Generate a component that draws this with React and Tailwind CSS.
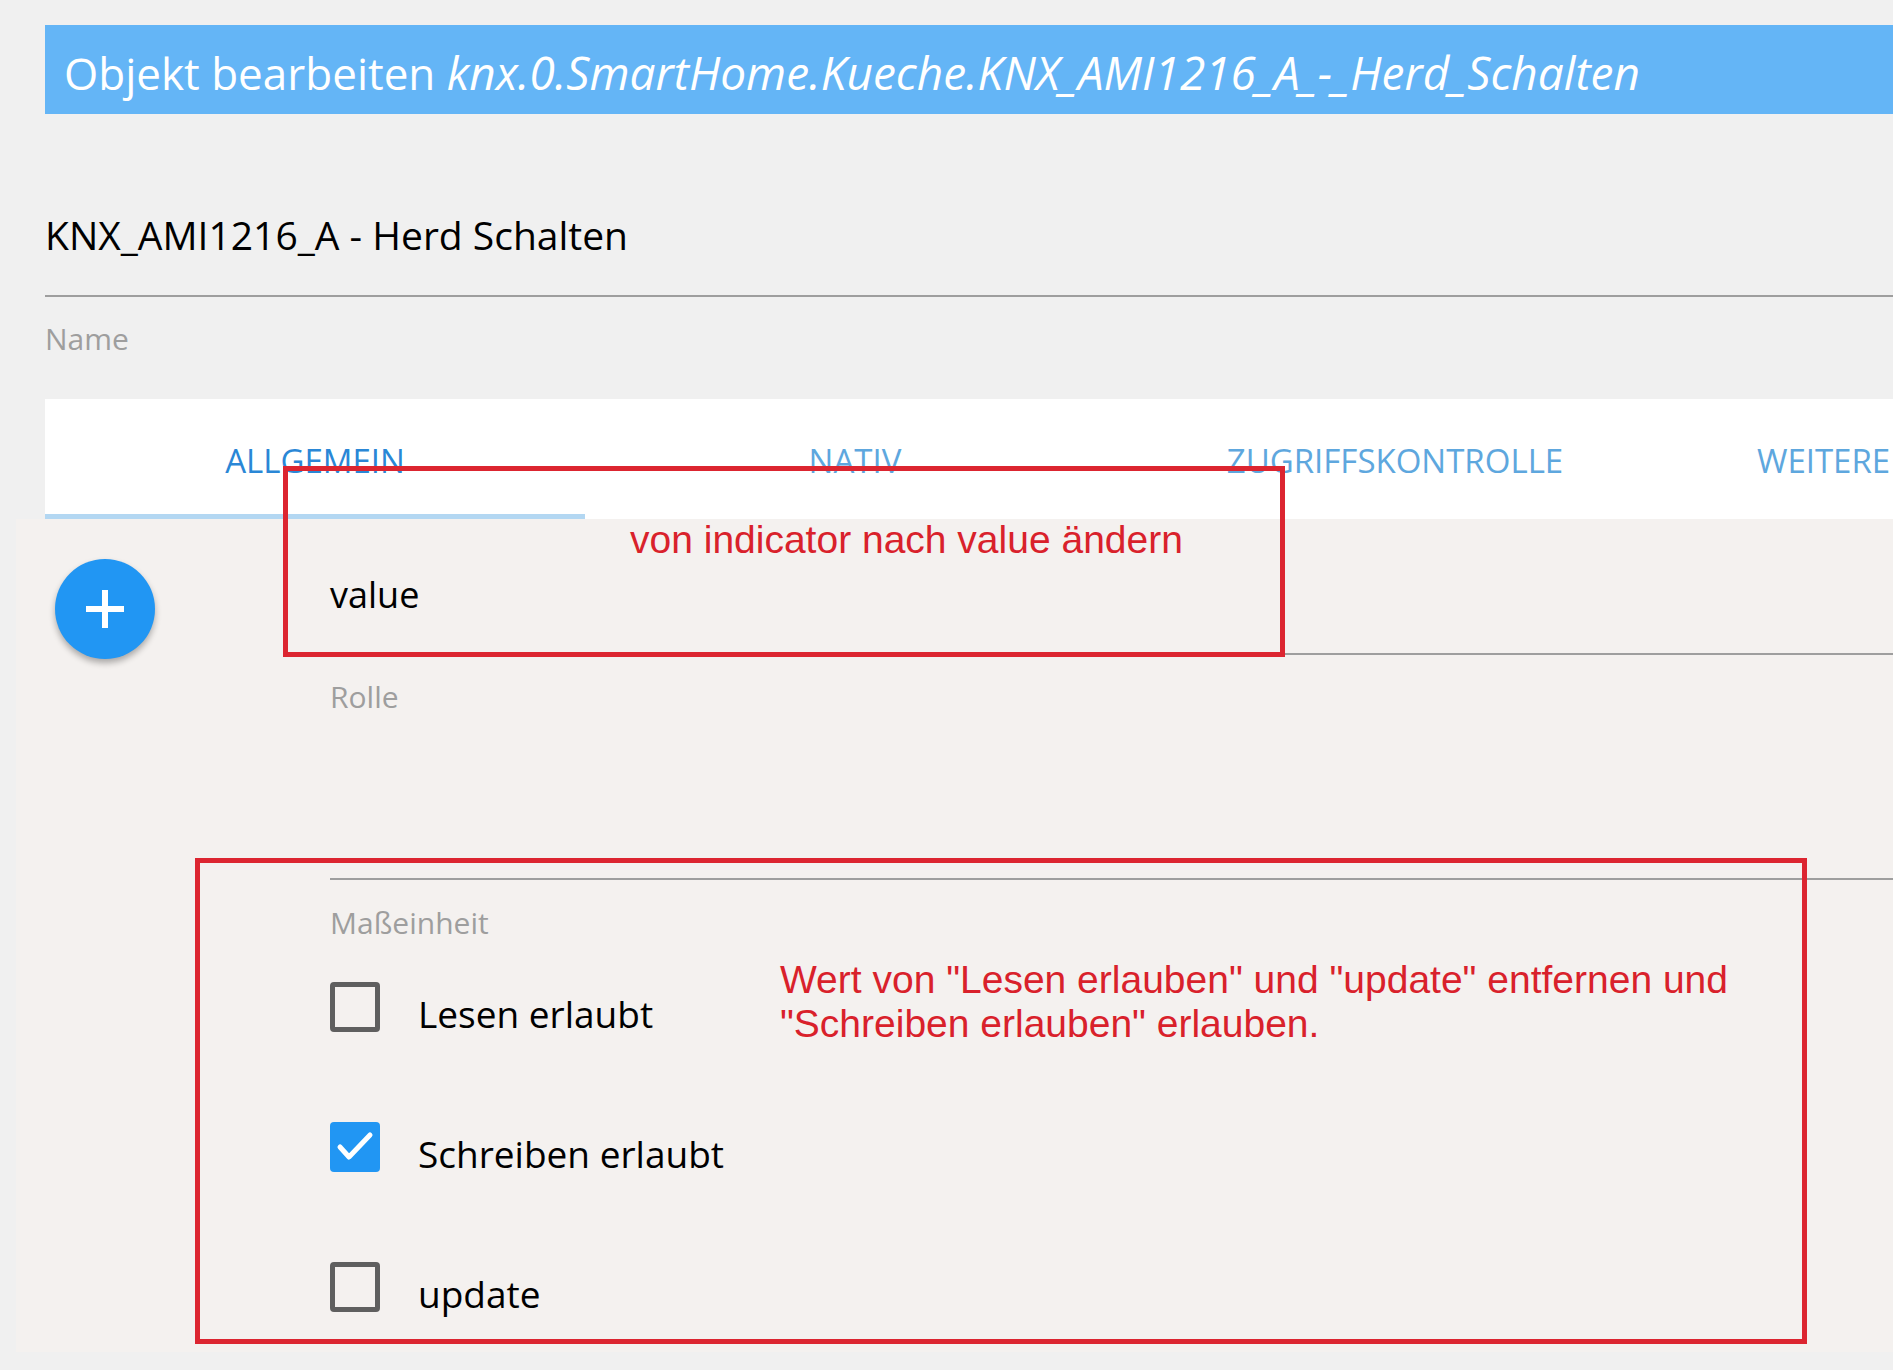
import React from 'react';

const tabs = [
  { label: 'ALLGEMEIN', active: true },
  { label: 'NATIV' },
  { label: 'ZUGRIFFSKONTROLLE' },
  { label: 'WEITERE EINSTELLUNG' },
];

const flags = [
  { label: 'Lesen erlaubt', checked: false },
  { label: 'Schreiben erlaubt', checked: true },
  { label: 'update', checked: false },
];

const Checkbox = ({ checked }) =>
  checked ? (
    <div className="w-[50px] h-[50px] rounded-[4px] bg-[#2196f3] shrink-0">
      <svg width="50" height="50" viewBox="0 0 50 50">
        <path d="M10 25 L19 35 L40 13" fill="none" stroke="white" strokeWidth="5" strokeLinecap="round" strokeLinejoin="round" />
      </svg>
    </div>
  ) : (
    <div className="w-[50px] h-[50px] rounded-[4px] border-[5px] border-[#5f5f5f] shrink-0" />
  );

export default function App() {
  return (
    <div className="relative w-[1893px] h-[1370px] overflow-hidden bg-[#f0f0f0] font-['Open_Sans',sans-serif]">
      <div className="pt-[25px] pl-[45px]">
        <div className="h-[89px] bg-[#64b5f6] pl-[19px] pt-[6px] flex items-center text-white text-[44px] whitespace-nowrap">
          Objekt bearbeiten&nbsp;<span className="italic text-[46px]">knx.0.SmartHome.Kueche.KNX_AMI1216_A_-_Herd_Schalten</span>
        </div>

        <div className="mt-[98px] text-[39px] leading-[46px] text-black whitespace-nowrap">KNX_AMI1216_A - Herd Schalten</div>
        <div className="mt-[37px] h-[2px] bg-[#9e9e9e]" />
        <div className="mt-[24px] text-[30px] leading-[36px] text-[#9e9e9e]">Name</div>

        <div className="mt-[42px] flex h-[120px] bg-white overflow-hidden">
          {tabs.map((t) => (
            <div
              key={t.label}
              className={`w-[540px] shrink-0 flex items-center justify-center pt-[8px] border-b-[5px] whitespace-nowrap text-[33px] leading-[40px] ${
                t.active ? 'border-[#b3d7f2] text-[#2a87d6]' : 'border-transparent text-[#5ea7de]'
              }`}
            >
              {t.label}
            </div>
          ))}
        </div>
      </div>

      <div className="ml-[16px] h-[833px] bg-[#f4f1ef] flex">
        <div className="ml-[39px] mt-[40px] w-[100px] h-[100px] shrink-0 rounded-full bg-[#2196f3] shadow-[0_4px_6px_rgba(0,0,0,0.3)] flex items-center justify-center">
          <div className="relative w-[38px] h-[38px]">
            <div className="absolute left-0 top-[16px] w-[38px] h-[6px] bg-white" />
            <div className="absolute top-0 left-[16px] w-[6px] h-[38px] bg-white" />
          </div>
        </div>

        <div className="ml-[175px] flex-1 pt-[54px] flex flex-col">
          <div className="text-[36px] leading-[44px] text-black">value</div>
          <div className="mt-[36px] h-[2px] bg-[#9e9e9e]" />
          <div className="mt-[24px] text-[30px] leading-[36px] text-[#9e9e9e]">Rolle</div>
          <div className="mt-[163px] h-[2px] bg-[#9e9e9e]" />
          <div className="mt-[25px] text-[30px] leading-[36px] text-[#9e9e9e]">Maßeinheit</div>

          <div className="mt-[41px] flex flex-col gap-[90px]">
            {flags.map((f) => (
              <div key={f.label} className="flex items-start h-[50px]">
                <Checkbox checked={f.checked} />
                <span className="ml-[38px] mt-[10px] text-[37px] leading-[44px] text-black whitespace-nowrap">{f.label}</span>
              </div>
            ))}
          </div>
        </div>
      </div>

      {/* annotations */}
      <div className="absolute left-[283px] top-[466px] w-[1002px] h-[191px] border-[5px] border-[#dc2530]" />
      <div className="absolute left-[630px] top-[517px] text-[39px] leading-[45px] text-[#d9212b] font-['Liberation_Sans',Arial,sans-serif] whitespace-nowrap">
        von indicator nach value ändern
      </div>
      <div className="absolute left-[195px] top-[858px] w-[1612px] h-[486px] border-[5px] border-[#dc2530]" />
      <div className="absolute left-[780px] top-[958px] text-[39px] leading-[44px] text-[#d9212b] font-['Liberation_Sans',Arial,sans-serif] whitespace-nowrap">
        Wert von "Lesen erlauben" und "update" entfernen und
        <br />
        "Schreiben erlauben" erlauben.
      </div>
    </div>
  );
}
